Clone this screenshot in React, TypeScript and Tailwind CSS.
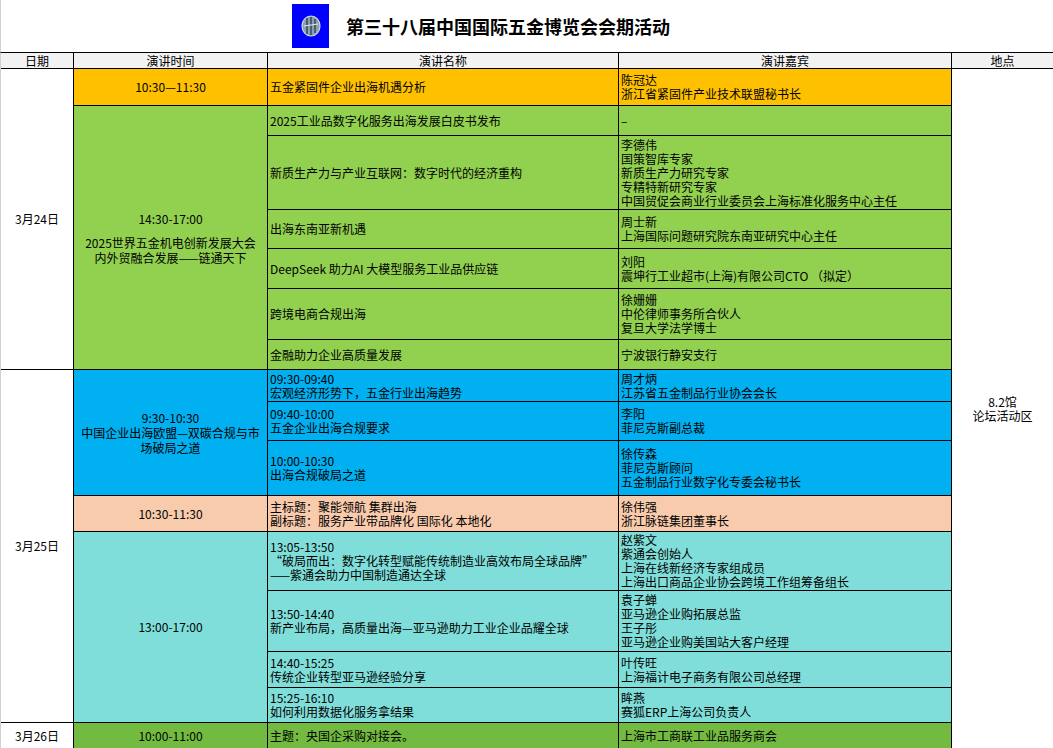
import React from "react";

const F = { fontFamily: '"Noto Sans CJK SC", "Liberation Sans", sans-serif' };

type R = { n: React.ReactNode; g: string[]; bg: string };

const rows: R[] = [
  { n: "五金紧固件企业出海机遇分析", g: ["陈冠达", "浙江省紧固件产业技术联盟秘书长"], bg: "bg-[#ffc000]" },
  { n: "2025工业品数字化服务出海发展白皮书发布", g: ["–"], bg: "bg-[#92d050]" },
  { n: "新质生产力与产业互联网：数字时代的经济重构", g: ["李德伟", "国策智库专家", "新质生产力研究专家", "专精特新研究专家", "中国贸促会商业行业委员会上海标准化服务中心主任"], bg: "bg-[#92d050]" },
  { n: "出海东南亚新机遇", g: ["周士新", "上海国际问题研究院东南亚研究中心主任"], bg: "bg-[#92d050]" },
  { n: "DeepSeek 助力AI 大模型服务工业品供应链", g: ["刘阳", "震坤行工业超市(上海)有限公司CTO （拟定）"], bg: "bg-[#92d050]" },
  { n: "跨境电商合规出海", g: ["徐姗姗", "中伦律师事务所合伙人", "复旦大学法学博士"], bg: "bg-[#92d050]" },
  { n: "金融助力企业高质量发展", g: ["宁波银行静安支行"], bg: "bg-[#92d050]" },
  { n: <>09:30-09:40<br />宏观经济形势下，五金行业出海趋势</>, g: ["周才炳", "江苏省五金制品行业协会会长"], bg: "bg-[#00b0f0]" },
  { n: <>09:40-10:00<br />五金企业出海合规要求</>, g: ["李阳", "菲尼克斯副总裁"], bg: "bg-[#00b0f0]" },
  { n: <>10:00-10:30<br />出海合规破局之道</>, g: ["徐传森", "菲尼克斯顾问", "五金制品行业数字化专委会秘书长"], bg: "bg-[#00b0f0]" },
  { n: <>主标题：聚能领航 集群出海<br />副标题：服务产业带品牌化 国际化 本地化</>, g: ["徐伟强", "浙江脉链集团董事长"], bg: "bg-[#f8cbad]" },
  { n: <>13:05-13:50<br />“破局而出：数字化转型赋能传统制造业高效布局全球品牌”<br />——紫通会助力中国制造通达全球</>, g: ["赵紫文", "紫通会创始人", "上海在线新经济专家组成员", "上海出口商品企业协会跨境工作组筹备组长"], bg: "bg-[#80deda]" },
  { n: <>13:50-14:40<br />新产业布局，高质量出海—亚马逊助力工业企业品耀全球</>, g: ["袁子蝉", "亚马逊企业购拓展总监", "王子彤", "亚马逊企业购美国站大客户经理"], bg: "bg-[#80deda]" },
  { n: <>14:40-15:25<br />传统企业转型亚马逊经验分享</>, g: ["叶传旺", "上海福计电子商务有限公司总经理"], bg: "bg-[#80deda]" },
  { n: <>15:25-16:10<br />如何利用数据化服务拿结果</>, g: ["眸燕", "赛狐ERP上海公司负责人"], bg: "bg-[#80deda]" },
  { n: "主题：央国企采购对接会。", g: ["上海市工商联工业品服务商会"], bg: "bg-[#72bb40]" },
];

const rowStart = [
  "row-start-2", "row-start-3", "row-start-4", "row-start-5", "row-start-6", "row-start-7", "row-start-8", "row-start-9",
  "row-start-10", "row-start-11", "row-start-12", "row-start-13", "row-start-14", "row-start-15", "row-start-16", "row-start-17",
];

function Logo() {
  return (
    <div className="w-[37px] h-[44px] bg-[#0000ff] flex items-center justify-center">
      <svg width="22" height="26" viewBox="0 0 22 26">
        <ellipse cx="11" cy="13" rx="9" ry="10" fill="#8aa0b0" stroke="#d0d8e0" strokeWidth="1.2" />
        <path d="M7 5 L7 21 M11 4 L11 22 M15 6 L15 20" stroke="#2a3a50" strokeWidth="1.3" />
        <path d="M4 13 L18 11" stroke="#e0e8f0" strokeWidth="1.2" />
      </svg>
    </div>
  );
}

export default function App() {
  return (
    <div className="w-[1053px] h-[748px] bg-white text-black text-[12px] leading-[14px] overflow-hidden" style={F}>
      <div className="h-[52px] flex items-center justify-start gap-[17px] pl-[291px] border-l border-[#d0d0d0]">
        <Logo />
        <div className="text-[18px] font-bold">第三十八届中国国际五金博览会会期活动</div>
      </div>
      <div className="grid grid-cols-[72px_193px_350px_332px_101px] grid-rows-[15px_36px_29px_73px_38px_39px_50px_29px_31px_38px_54px_35px_58px_60px_35px_34px_26px] gap-px bg-black border-t border-black border-l border-l-[#d0d0d0] h-[696px]">
        {["日期", "演讲时间", "演讲名称", "演讲嘉宾", "地点"].map((h) => (
          <div key={h} className="bg-[#f2f2f2] flex items-center justify-center row-start-1">{h}</div>
        ))}
        <div className="bg-white col-start-1 row-start-2 row-span-7 flex items-center justify-center">3月24日</div>
        <div className="bg-white col-start-1 row-start-9 row-span-8 flex items-center justify-center">3月25日</div>
        <div className="bg-white col-start-1 row-start-17 flex items-center justify-center">3月26日</div>

        <div className="bg-[#ffc000] col-start-2 row-start-2 flex items-center justify-center">10:30—11:30</div>
        <div className="bg-[#92d050] col-start-2 row-start-3 row-span-6 flex flex-col items-center justify-center text-center leading-[15px]">
          <div className="mb-[9px]">14:30-17:00</div>
          <div>2025世界五金机电创新发展大会<br />内外贸融合发展——链通天下</div>
        </div>
        <div className="bg-[#00b0f0] col-start-2 row-start-9 row-span-3 flex flex-col items-center justify-center text-center px-1 leading-[15px]">
          <div>9:30-10:30</div>
          <div>中国企业出海欧盟—双碳合规与市场破局之道</div>
        </div>
        <div className="bg-[#f8cbad] col-start-2 row-start-12 flex items-center justify-center">10:30-11:30</div>
        <div className="bg-[#80deda] col-start-2 row-start-13 row-span-4 flex items-center justify-center">13:00-17:00</div>
        <div className="bg-[#72bb40] col-start-2 row-start-17 flex items-center justify-center">10:00-11:00</div>

        {rows.map((r, i) => (
          <React.Fragment key={i}>
            <div className={`${r.bg} ${rowStart[i]} col-start-3 flex items-center px-[2px] whitespace-nowrap overflow-hidden`}>
              <div>{r.n}</div>
            </div>
            <div className={`${r.bg} ${rowStart[i]} col-start-4 flex flex-col justify-center px-[2px] whitespace-nowrap overflow-hidden`}>
              {r.g.map((l, j) => <div key={j}>{l}</div>)}
            </div>
          </React.Fragment>
        ))}

        <div className="bg-white col-start-5 row-start-2 row-span-16 flex flex-col items-center justify-center text-center">
          <div>8.2馆</div>
          <div>论坛活动区</div>
        </div>
      </div>
    </div>
  );
}
